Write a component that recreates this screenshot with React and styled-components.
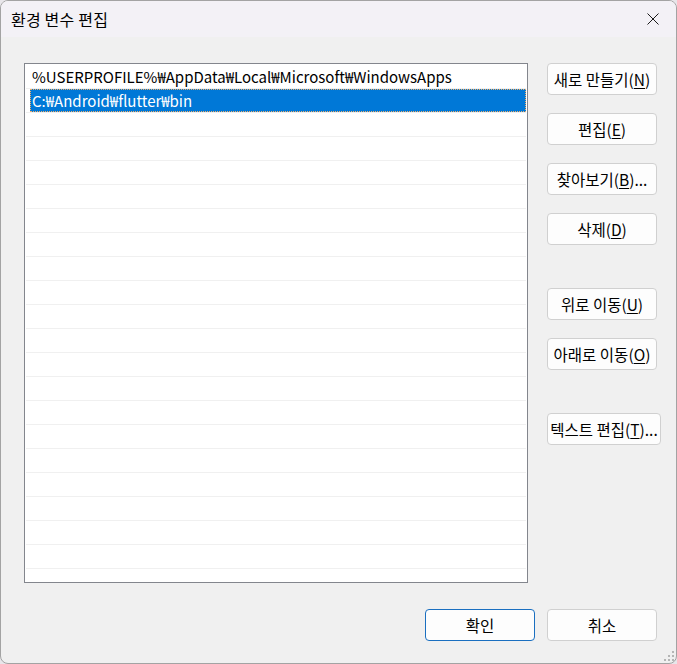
import React from 'react';
import styled, { createGlobalStyle } from 'styled-components';

const GlobalStyle = createGlobalStyle`
  html, body {
    margin: 0;
    padding: 0;
    background: #e8e6ea;
  }
  * {
    box-sizing: border-box;
  }
`;

const Window = styled.div`
  position: relative;
  width: 677px;
  height: 664px;
  display: flex;
  flex-direction: column;
  background: #f0f0f0;
  border: 1px solid #a3a3a3;
  border-radius: 8px;
  overflow: hidden;
  font-family: 'Noto Sans CJK KR', 'Noto Sans', sans-serif;
  font-size: 15px;
  color: #000;
`;

const TitleBar = styled.div`
  height: 36px;
  flex: none;
  display: flex;
  align-items: center;
  justify-content: space-between;
  padding-left: 10px;
  background: #f3f1f6;
`;

const Title = styled.span`
  font-size: 16px;
  letter-spacing: 0.2px;
`;

const CloseButton = styled.button`
  width: 46px;
  height: 36px;
  border: none;
  background: transparent;
  display: flex;
  align-items: center;
  justify-content: center;
  padding: 0;
`;

const Body = styled.div`
  flex: 1;
  display: flex;
  flex-direction: column;
  padding: 26px 0 0 23px;
`;

const Main = styled.div`
  display: flex;
  gap: 19px;
`;

const List = styled.div`
  width: 504px;
  height: 520px;
  padding-top: 1px;
  background: #fff;
  border: 1px solid #83868d;
  overflow: hidden;
`;

const Row = styled.div`
  height: 24px;
  display: flex;
  margin: 0 1px;
  border-bottom: 1px solid #f0f0f0;
`;

const Item = styled.div`
  flex: 1;
  margin-left: 4px;
  padding-left: 2px;
  display: flex;
  align-items: center;
  white-space: nowrap;
  background: ${(p) => (p.$selected ? '#0078d7' : 'transparent')};
  color: ${(p) => (p.$selected ? '#fff' : '#000')};
  outline: ${(p) => (p.$selected ? '1px dotted #f2b06a' : 'none')};
  outline-offset: -1px;
`;

const Side = styled.div`
  display: flex;
  flex-direction: column;
`;

const Button = styled.button`
  width: ${(p) => p.$width || 110}px;
  height: 32px;
  margin-top: ${(p) => p.$top || 0}px;
  padding: 0;
  font-family: inherit;
  font-size: 15.5px;
  color: #000;
  background: #fdfdfd;
  border: 1px solid ${(p) => (p.$primary ? '#1a6fc0' : '#d0d0d0')};
  border-radius: 4px;
  white-space: nowrap;
  u {
    text-underline-offset: 2px;
  }
`;

const Footer = styled.div`
  display: flex;
  justify-content: flex-end;
  gap: 12px;
  padding-right: 19px;
  margin-top: 26px;
`;

const Grip = styled.svg`
  position: absolute;
  right: 1px;
  bottom: 1px;
`;

const entries = [
  '%USERPROFILE%₩AppData₩Local₩Microsoft₩WindowsApps',
  'C:₩Android₩flutter₩bin',
];

const rows = Array.from({ length: 22 }, (_, i) => entries[i] || '');

const sideButtons = [
  { label: '새로 만들기', key: 'N', top: 0 },
  { label: '편집', key: 'E', top: 18 },
  { label: '찾아보기', key: 'B', top: 18, dots: true },
  { label: '삭제', key: 'D', top: 18 },
  { label: '위로 이동', key: 'U', top: 43 },
  { label: '아래로 이동', key: 'O', top: 18 },
  { label: '텍스트 편집', key: 'T', top: 43, dots: true, width: 114 },
];

const App = () => {
  return (
    <>
      <GlobalStyle />
      <Window>
        <TitleBar>
          <Title>환경 변수 편집</Title>
          <CloseButton>
            <svg width="12" height="12" viewBox="0 0 12 12">
              <path d="M0.5 0.5 L11.5 11.5 M11.5 0.5 L0.5 11.5" stroke="#1a1a1a" strokeWidth="1" />
            </svg>
          </CloseButton>
        </TitleBar>
        <Body>
          <Main>
            <List>
              {rows.map((text, i) => (
                <Row key={i}>
                  <Item $selected={i === 1}>{text}</Item>
                </Row>
              ))}
            </List>
            <Side>
              {sideButtons.map((b) => (
                <Button key={b.key} $top={b.top} $width={b.width}>
                  {b.label}(<u>{b.key}</u>){b.dots ? '...' : ''}
                </Button>
              ))}
            </Side>
          </Main>
          <Footer>
            <Button $primary>확인</Button>
            <Button>취소</Button>
          </Footer>
        </Body>
        <Grip width="12" height="12" viewBox="0 0 12 12">
          <rect x="9" y="1" width="2" height="2" fill="#b5b5b5" />
          <rect x="5" y="5" width="2" height="2" fill="#b5b5b5" />
          <rect x="9" y="5" width="2" height="2" fill="#b5b5b5" />
          <rect x="1" y="9" width="2" height="2" fill="#b5b5b5" />
          <rect x="5" y="9" width="2" height="2" fill="#b5b5b5" />
          <rect x="9" y="9" width="2" height="2" fill="#b5b5b5" />
        </Grip>
      </Window>
    </>
  );
};

export default App;
